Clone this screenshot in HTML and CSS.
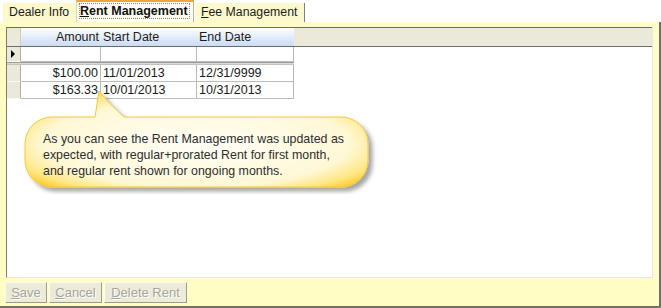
FILE: index.html
```html
<!DOCTYPE html>
<html lang="en">
<head>
    <meta charset="UTF-8">
    <title>Rent Management</title>
    <link rel="stylesheet" href="styles.css">
</head>
<body>
    <div class="window">
        <div class="tabs">
            <div class="tab">Dealer Info</div>
            <div class="tab active"><span class="focus"><u>R</u>ent Management</span></div>
            <div class="tab last"><u>F</u>ee Management</div>
        </div>

        <div class="panel">
            <div class="grid-area">
                <div class="grid-head">
                    <div class="corner"></div>
                    <div class="col-head amount">Amount</div>
                    <div class="col-head start">Start Date</div>
                    <div class="col-head end">End Date</div>
                </div>

                <div class="grid-row new-row">
                    <div class="row-head"><span class="arrow"></span></div>
                    <div class="cell amount"></div>
                    <div class="cell start"></div>
                    <div class="cell end"></div>
                </div>
                <div class="divider"></div>

                <div class="grid-row">
                    <div class="row-head"></div>
                    <div class="cell amount">$100.00</div>
                    <div class="cell start">11/01/2013</div>
                    <div class="cell end">12/31/9999</div>
                </div>
                <div class="grid-row">
                    <div class="row-head"></div>
                    <div class="cell amount">$163.33</div>
                    <div class="cell start">10/01/2013</div>
                    <div class="cell end">10/31/2013</div>
                </div>
            </div>

            <div class="buttons">
                <button class="btn save" disabled><u>S</u>ave</button>
                <button class="btn cancel" disabled><u>C</u>ancel</button>
                <button class="btn delete" disabled><u>D</u>elete Rent</button>
            </div>
        </div>

        <!-- annotation bubble laid over the grid -->
        <div class="callout">
            <svg class="bubble" width="362" height="108" viewBox="0 0 362 108">
                <defs>
                    <radialGradient id="glow" cx="0.5" cy="0.55" r="0.62">
                        <stop offset="0" stop-color="#fffef6"/>
                        <stop offset="0.72" stop-color="#fff8d6"/>
                        <stop offset="0.9" stop-color="#ffe680"/>
                        <stop offset="1" stop-color="#ffcc2e"/>
                    </radialGradient>
                    <filter id="shadow" x="-10%" y="-10%" width="130%" height="140%">
                        <feDropShadow dx="4" dy="4" stdDeviation="2" flood-color="#000" flood-opacity="0.35"/>
                    </filter>
                </defs>
                <path d="M 34 31 L 77 31 Q 79 18 81 5 Q 92 19 106 31 L 322 31 A 27 27 0 0 1 350 58 L 350 74 A 27 27 0 0 1 322 101 L 34 101 A 27 27 0 0 1 7 74 L 7 58 A 27 27 0 0 1 34 31 Z"
                      fill="url(#glow)" stroke="#f6c63c" stroke-width="1" filter="url(#shadow)"/>
            </svg>
            <p class="callout-text">As you can see the Rent Management was updated as<br>expected, with regular+prorated Rent for first month,<br>and regular rent shown for ongoing months.</p>
        </div>
    </div>
</body>
</html>
```

FILE: styles.css
```css
body {
    margin: 0;
    padding: 0;
    background-color: #fff;
    font-family: "Liberation Sans", Arial, sans-serif;
    font-size: 12.5px;
    color: #1a1a1a;
}

.window {
    position: relative;
    width: 661px;
    height: 308px;
    overflow: hidden;
}

/* tab strip */
.tabs {
    display: flex;
    align-items: flex-end;
    height: 22px;
}

.tab {
    box-sizing: border-box;
    height: 19px;
    line-height: 19px;
    padding-left: 6px;
    background-color: #fcf9cf;
    font-size: 12.3px;
    color: #1c1c1c;
}

.tab:first-child {
    width: 73px;
    margin-left: 3px;
}

.tab.active {
    width: 118px;
    height: 22px;
    line-height: 18px;
    padding-left: 3px;
    background-color: #fffef2;
    border-top: 2px solid #f3a533;
    border-left: 1px solid #d9d6c0;
    border-right: 1px solid #b5b29e;
    font-size: 12.5px;
    font-weight: bold;
    color: #111;
}

.tab.active .focus {
    display: inline-block;
    line-height: 14px;
    padding: 0 1px 0 0;
    outline: 1px dotted #8a8a7a;
}

.tab.last {
    width: 110px;
    margin-left: 1px;
    border-right: 1px solid #808080;
}

.tab u,
.btn u {
    text-decoration: underline;
}

/* yellow page body */
.panel {
    box-sizing: border-box;
    display: flex;
    flex-direction: column;
    height: 286px;
    padding: 5px 6px 3px 5px;
    background-color: #fffcc4;
    border-right: 2px solid #707070;
    border-bottom: 2px solid #707070;
}

.grid-area {
    flex: 1;
    margin-left: 1px;
    background-color: #fff;
    border-left: 1px solid #7c7c7c;
    border-right: 1px solid #e6e6e6;
    border-bottom: 1px solid #e6e6e6;
}

.grid-head {
    display: flex;
    height: 20px;
    box-sizing: border-box;
    background-color: #ebe9d9;
    border-top: 1px solid #6c6c6c;
    border-bottom: 1px solid #6c6c6c;
}

.corner {
    width: 14px;
    border-right: 1px solid #d0cebd;
    box-sizing: border-box;
}

.col-head {
    box-sizing: border-box;
    line-height: 18px;
    background: linear-gradient(#fdfeff, #cadcf4);
    color: #1c1c1c;
}

.amount {
    width: 80px;
    text-align: right;
    padding-right: 2px;
}

.start {
    width: 96px;
    padding-left: 2px;
}

.end {
    width: 97px;
    padding-left: 2px;
}

.grid-row {
    display: flex;
    height: 17px;
}

.grid-row.new-row {
    height: 15px;
}

.row-head {
    box-sizing: border-box;
    width: 14px;
    display: flex;
    align-items: center;
    padding-left: 4px;
    background-color: #ebe9d9;
    border-right: 1px solid #b3b09f;
    border-bottom: 1px solid #fafaf4;
}

.arrow {
    width: 0;
    height: 0;
    border-left: 4px solid #000;
    border-top: 4px solid transparent;
    border-bottom: 4px solid transparent;
}

.cell {
    box-sizing: border-box;
    line-height: 17px;
    border-right: 1px solid #b9b9b9;
    border-bottom: 1px solid #bcbcbc;
    color: #1a1a1a;
}

.divider {
    box-sizing: border-box;
    width: 287px;
    height: 3px;
    background-color: #d9d9d9;
    border-top: 1px solid #9c9c9c;
    border-bottom: 1px solid #c2c2c2;
}

/* bottom buttons */
.buttons {
    display: flex;
    gap: 2px;
    margin-top: 4px;
}

.btn {
    box-sizing: border-box;
    height: 21px;
    padding: 0;
    background-color: #ecead9;
    border: 1px solid;
    border-color: #fbfaf2 #9e9c8c #9e9c8c #fbfaf2;
    font-family: "Liberation Sans", Arial, sans-serif;
    font-size: 13px;
    color: #a6a597;
    text-shadow: 1px 1px 0 #fff;
}

.btn.save {
    width: 42px;
}

.btn.cancel {
    width: 53px;
}

.btn.delete {
    width: 83px;
}

/* annotation */
.callout {
    position: absolute;
    left: 18px;
    top: 86px;
    width: 362px;
    height: 108px;
}

.bubble {
    position: absolute;
    top: 0;
    left: 0;
}

.callout-text {
    position: relative;
    margin: 0;
    padding: 45px 0 0 25px;
    font-size: 12.4px;
    line-height: 16px;
    color: #2e2e2e;
}
```
